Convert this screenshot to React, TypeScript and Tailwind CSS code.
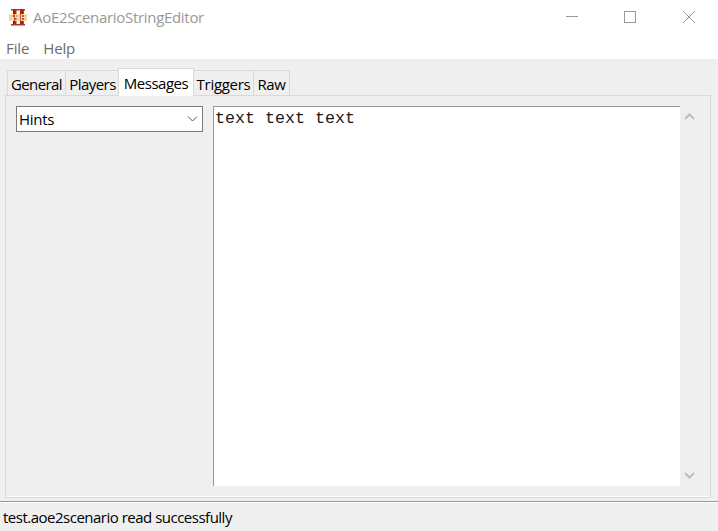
import { useState } from "react";

const tabs = [
  { name: "General", box: "w-[59px] border-l", text: "tracking-[-0.58px]" },
  { name: "Players", box: "w-[53px] pl-px", text: "tracking-[-0.52px]" },
  { name: "Messages", box: "w-[76px]", text: "tracking-[-0.5px]" },
  { name: "Triggers", box: "w-[60px]", text: "tracking-[-0.3px]" },
  { name: "Raw", box: "w-[36px]", text: "tracking-[-0.4px]" },
];

function AppIcon() {
  return (
    <svg width="20" height="20" viewBox="0 0 20 20" className="shrink-0">
      <path d="M3 2h14v1.500H3zM3 17h14v1.500H3z" fill="#a93a30" />
      <path d="M5 3h3.500v14H5zM12 3h3.500v14H12z" fill="#b81c1c" />
      <path d="M5 3h1v14H5zM14.500 3h1v14h-1z" fill="#821010" />
      <path d="M1 7h18v7H1z" fill="#c99a55" fillOpacity="0.45" />
      <g fill="none" stroke="#f8e08c" strokeWidth="1" shapeRendering="crispEdges">
        <path d="M6 7.500H1.500v3h4v3H1M12 7.500H7.500v3h4v3H7M19 7.500h-5.500v6H19M14 10.500h5M18.500 10v4" />
      </g>
    </svg>
  );
}

export default function App() {
  const [active, setActive] = useState("Messages");
  return (
    <div className="flex h-[531px] w-[718px] flex-col overflow-hidden bg-[#efefef] font-['Open_Sans','Noto_Sans',sans-serif] text-[15px] leading-5 text-black">
      <header className="flex h-[37px] shrink-0 items-center bg-white pl-2 text-[#999999]">
        <div className="-mt-[3px]">
          <AppIcon />
        </div>
        <h1 className="-mt-[3px] ml-[5px] flex-1 whitespace-nowrap tracking-[-0.31px]">AoE2ScenarioStringEditor</h1>
        <svg width="160" height="20" viewBox="0 0 160 20" fill="none" stroke="#999999" shapeRendering="crispEdges" className="-mt-px">
          <path d="M8 8.500h12" />
          <path d="M66.500 3.500h11v11h-11z" />
          <path d="M125 3l12 12M137 3l-12 12" shapeRendering="auto" />
        </svg>
      </header>
      <nav className="flex h-[22px] shrink-0 items-start gap-[14px] bg-white pl-[6px] text-[#6d6d6d]">
        <button className="h-[21px] tracking-[-0.1px]">File</button>
        <button className="h-[21px] tracking-[-0.2px]">Help</button>
      </nav>

      <main className="flex h-[442px] shrink-0 flex-col pt-[9px] pr-[7px] pl-[5px]">
        <div className="z-10 flex h-[28px] shrink-0 items-end pl-[2px]">
          {tabs.map((tab) => (
            <button
              key={tab.name}
              onClick={() => setActive(tab.name)}
              className={`${tab.box} ${tab.text} shrink-0 whitespace-nowrap border-[#d9d9d9] ${
                active === tab.name
                  ? "-ml-px h-[28px] border-x border-t bg-white"
                  : "mb-px h-[25px] border-t border-r pt-[1px]"
              }`}
            >
              {tab.name}
            </button>
          ))}
        </div>
        <section className="-mt-px flex h-[403px] shrink-0 border border-[#d9d9d9] pt-[10px] pl-[10px] shadow-[inset_0_-1px_0_#ffffff]">
          <button className="flex h-[26px] w-[187px] items-center justify-between border border-[#7a7a7a] bg-white pr-1 pl-[2px]">
            <span className="tracking-[-0.3px]">Hints</span>
            <svg width="11" height="8" viewBox="0 0 11 8" fill="none" stroke="#555555">
              <path d="M1 1.500l4.500 4.500L10 1.500" />
            </svg>
          </button>
          <textarea
            defaultValue="text text text"
            spellCheck={false}
            className="ml-[10px] h-[380px] w-[467px] resize-none border-t border-l border-[#999999] bg-white pt-[2px] pl-px font-['Liberation_Mono',monospace] text-[16.67px] leading-5 text-[#1a1a1a] outline-none"
          />
          <div className="flex h-[380px] w-[19px] flex-col items-center justify-between pt-[6px] pb-[6px]">
            <svg width="11" height="9" viewBox="0 0 11 9" fill="none" stroke="#bdbdbd" strokeWidth="2">
              <path d="M1 7l4.500-4.500L10 7" />
            </svg>
            <svg width="11" height="9" viewBox="0 0 11 9" fill="none" stroke="#bdbdbd" strokeWidth="2">
              <path d="M1 2l4.500 4.500L10 2" />
            </svg>
          </div>
        </section>
      </main>

      <footer className="flex h-[30px] shrink-0 items-center border-t border-[#999999] pt-[1px] pl-[3px] shadow-[inset_0_1px_0_#ffffff]">
        <span className="whitespace-nowrap tracking-[-0.5px]">test.aoe2scenario read successfully</span>
      </footer>
    </div>
  );
}
